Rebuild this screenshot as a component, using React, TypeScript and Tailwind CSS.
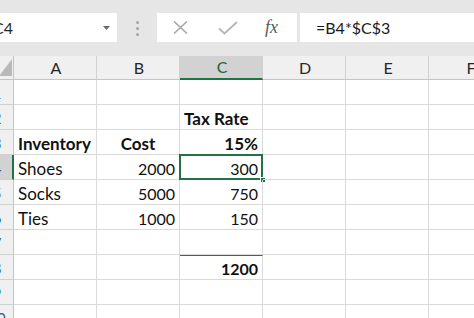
import clsx from "clsx"

type Cell = { text: string; bold?: boolean; align?: "left" | "center" | "right"; topRule?: boolean }

const cols = ["A", "B", "C", "D", "E", "F"]

const rows: Record<number, Record<number, Cell>> = {
  2: { 2: { text: "Tax Rate", bold: true } },
  3: {
    0: { text: "Inventory", bold: true },
    1: { text: "Cost", bold: true, align: "center" },
    2: { text: "15%", bold: true, align: "right" },
  },
  4: {
    0: { text: "Shoes" },
    1: { text: "2000", align: "right" },
    2: { text: "300", align: "right" },
  },
  5: {
    0: { text: "Socks" },
    1: { text: "5000", align: "right" },
    2: { text: "750", align: "right" },
  },
  6: {
    0: { text: "Ties" },
    1: { text: "1000", align: "right" },
    2: { text: "150", align: "right" },
  },
  8: { 2: { text: "1200", bold: true, align: "right", topRule: true } },
}

const activeRow = 4
const activeCol = 2

function Toolbar() {
  return (
    <div className="flex h-[56px] items-start bg-[#e6e6e6] pt-[13px]">
      {/* name box */}
      <div className="relative flex h-[29px] w-[117px] items-center bg-white">
        <span className="-ml-[7px] text-[16px] text-[#262626]">C4</span>
        <svg className="absolute left-[103px] top-[13px]" width="7" height="4" viewBox="0 0 7 4">
          <path d="M0 0h7L3.5 4z" fill="#6b6b6b" />
        </svg>
      </div>
      <div className="flex w-[40px] flex-col items-center gap-[3px] pt-[8px]">
        <span className="h-[3px] w-[3px] rounded-full bg-[#a6a6a6]" />
        <span className="h-[3px] w-[3px] rounded-full bg-[#a6a6a6]" />
        <span className="h-[3px] w-[3px] rounded-full bg-[#a6a6a6]" />
      </div>
      {/* cancel / enter / fx */}
      <div className="flex h-[29px] w-[140px] items-center bg-white">
        <svg className="ml-[16px]" width="15" height="13" viewBox="0 0 15 13">
          <path d="M1 0.5l13 12M14 0.5l-13 12" stroke="#a8a8a8" strokeWidth="1.6" fill="none" />
        </svg>
        <svg className="ml-[30px]" width="20" height="14" viewBox="0 0 20 14">
          <path d="M1 7.5l5.5 5L19 1" stroke="#b8b8b8" strokeWidth="2" fill="none" />
        </svg>
        <span className="ml-[27px] text-[18px] italic text-[#5a5a5a] [font-family:'Liberation_Serif',serif]">
          fx
        </span>
      </div>
      <div className="ml-[3px] flex h-[29px] flex-1 items-center bg-white pl-[16px] text-[16px] text-[#1a1a1a]">
        =B4*$C$3
      </div>
    </div>
  )
}

function Grid() {
  return (
    <div className="grid grid-cols-[14px_83px_83px_83px_83px_83px_83px]">
      {/* corner */}
      <div className="relative h-[24px] border-r border-b border-[#c4c4c4] bg-[#f0f0f0]">
        <svg className="absolute bottom-[3px] right-[1px]" width="13" height="17" viewBox="0 0 13 17">
          <path d="M13 0V17H0z" fill="#b9b9b9" />
        </svg>
      </div>
      {cols.map((c, i) => (
        <div
          key={c}
          className={clsx(
            "flex h-[24px] items-center justify-center border-r border-[#d0d0d0] pl-[2px] text-[16px]",
            i === activeCol
              ? "border-b-2 border-b-[#217346] bg-[#d2d2d2] text-[#1f5e3c]"
              : "border-b border-b-[#c4c4c4] bg-[#f0f0f0] text-[#262626]"
          )}
        >
          {c}
        </div>
      ))}

      {Array.from({ length: 10 }, (_, r) => r + 1).map((r) => (
        <Row key={r} r={r} />
      ))}
    </div>
  )
}

function Row({ r }: { r: number }) {
  const data = rows[r] || {}
  return (
    <>
      <div
        className={clsx(
          "flex h-[25px] items-end overflow-hidden border-b border-[#d0d0d0] pb-[2px]",
          r === activeRow ? "border-r-2 border-r-[#217346] bg-[#d2d2d2]" : "border-r border-r-[#c4c4c4] bg-[#f0f0f0]"
        )}
      >
        <div className="-ml-[18px] w-[30px] shrink-0 text-center text-[15px] leading-[18px] text-[#3b5a8a]">{r}</div>
      </div>
      {cols.map((_, ci) => {
        const cell = data[ci]
        const active = r === activeRow && ci === activeCol
        const numeric = cell && /^[0-9]+$/.test(cell.text)
        return (
          <div
            key={ci}
            className={clsx(
              "relative flex h-[25px] items-end whitespace-nowrap border-r border-b border-[#dadada] px-[4px] pb-[1px] leading-[18px] text-[#111]",
              numeric ? "text-[16px]" : "text-[17px]",
              cell?.align === "right" && "justify-end",
              cell?.align === "center" && "justify-center",
              cell?.bold && "font-bold",
              cell?.topRule && "border-t border-t-[#595959]"
            )}
          >
            {cell?.text}
            {active && (
              <>
                <div className="pointer-events-none absolute -left-[1px] -top-[1px] -right-[1px] -bottom-[1px] border-2 border-[#217346]" />
                <div className="absolute -bottom-[4px] -right-[4px] h-[6px] w-[6px] border border-white bg-[#217346]" />
              </>
            )}
          </div>
        )
      })}
    </>
  )
}

export default function App() {
  return (
    <div className="h-[318px] w-[474px] overflow-hidden bg-white [font-family:Lato,'Liberation_Sans',sans-serif]">
      <Toolbar />
      <Grid />
    </div>
  )
}
